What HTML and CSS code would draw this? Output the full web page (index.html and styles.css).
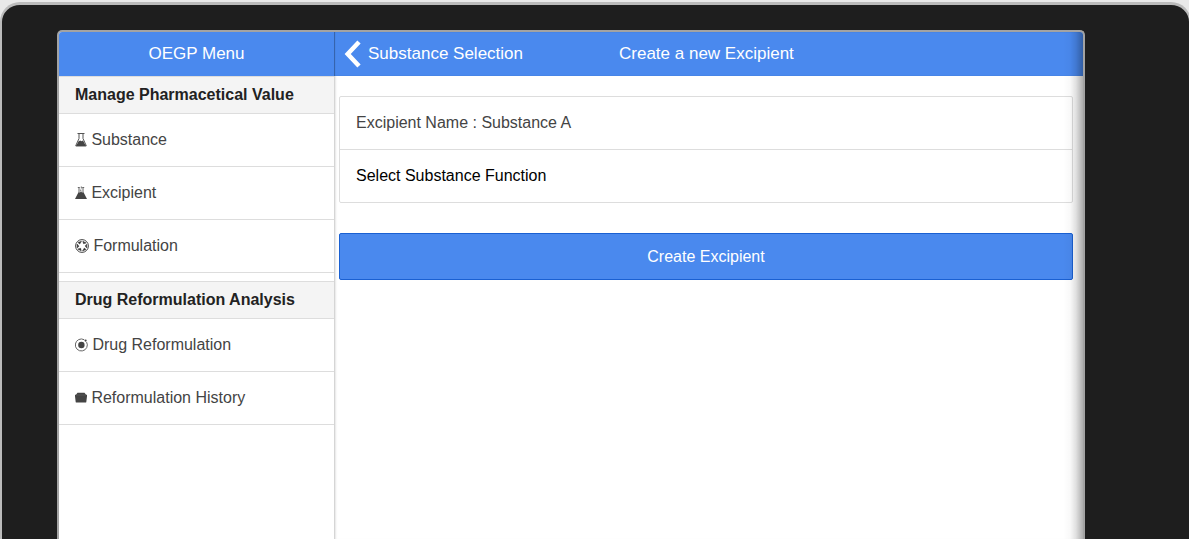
FILE: index.html
```html
<!DOCTYPE html>
<html lang="en">
<head>
<meta charset="utf-8">
<title>OEGP Menu</title>
<link rel="stylesheet" href="styles.css">
</head>
<body>
<div class="device">
  <div class="screen">
    <aside class="menu">
      <header class="bar menu-bar">OEGP Menu</header>
      <h2 class="divider">Manage Pharmacetical Value</h2>
      <a class="item">
        <svg class="icon" width="12" height="14" viewBox="0 0 12 14"><path d="M2.500 .5h7M4 1v4.500L.7 12.800h10.600L8 5.500V1" fill="none" stroke="#555" stroke-width="1"/><path d="M3.600 8.300l1.700-.7 1 .7 1.700-.8 3 5.800H1z" fill="#444"/></svg>
        <span>Substance</span>
      </a>
      <a class="item">
        <svg class="icon" width="12" height="14" viewBox="0 0 12 14"><path d="M2.800 1.500h2M7.200 1.500h2M4 2v4M8 2v4M6.300 .5v2M5.800 3.500V5" fill="none" stroke="#666" stroke-width="1"/><path d="M3.600 6l1.400.5 1-1.500 1 1.500L8.400 6 12 13H0z" fill="#444"/></svg>
        <span>Excipient</span>
      </a>
      <a class="item">
        <svg class="icon" width="14" height="14" viewBox="0 0 14 14"><circle cx="7" cy="7" r="6.400" fill="none" stroke="#444" stroke-width="1"/><path d="M3 3.500L6.500 2.200 4.700 5zM7.800 2.200l3.400 1.700-2.700.8zM11.700 5.200l.2 3.900-1.800-2.200zM11 10.500l-3.500 1.400 1.800-2.800zM6.200 11.800l-3.400-1.700 2.900-.8zM2.200 8.900l-.1-3.900 1.900 2.200z" fill="#333" stroke="#333" stroke-width=".5"/></svg>
        <span>Formulation</span>
      </a>
      <h2 class="divider second">Drug Reformulation Analysis</h2>
      <a class="item">
        <svg class="icon" width="13" height="14" viewBox="0 0 13 14"><path d="M9.200 1.700A6 6 0 1 0 11.600 4.100" fill="none" stroke="#666" stroke-width="1"/><circle cx="10.600" cy="2.600" r="1.100" fill="#444"/><circle cx="6.400" cy="7" r="3.200" fill="#444"/></svg>
        <span>Drug Reformulation</span>
      </a>
      <a class="item">
        <svg class="icon" width="12" height="14" viewBox="0 0 12 14"><path d="M2.500 1.700h7l1.500 2h1v1.500l-.7 5.800q-.1.600-.7.600H1.400q-.6 0-.7-.6L0 5.200V3.700h1z" fill="#444"/><path d="M1 4h10" stroke="#666" stroke-width=".5"/></svg>
        <span>Reformulation History</span>
      </a>
    </aside>
    <main class="content">
      <header class="bar content-bar">
        <a class="back">
          <svg width="18" height="30" viewBox="0 0 18 30"><path d="M15 3L3.700 15 15 27" fill="none" stroke="#fff" stroke-width="4.500"/></svg>
          <span>Substance Selection</span>
        </a>
        <h1 class="title">Create a new Excipient</h1>
      </header>
      <section class="form">
        <div class="card">
          <div class="row">Excipient Name : Substance A</div>
          <div class="row function">Select Substance Function</div>
        </div>
        <button class="create">Create Excipient</button>
      </section>
    </main>
    <div class="edge-shadow"></div>
  </div>
</div>
</body>
</html>
```
FILE: styles.css
```css
* { box-sizing: border-box; }
html { height: 100%; overflow: hidden; }
body {
  margin: 0;
  height: 539px;
  padding-top: 2px;
  overflow: hidden;
  background: #e9e9e9;
  font-family: "Liberation Sans", Arial, sans-serif;
  font-size: 16px;
}
.device {
  width: 1191px;
  height: 537px;
  padding: 25px 55px 0;
  border: 2px solid #bbb;
  border-top-width: 3px;
  border-bottom: 0;
  border-radius: 20px 20px 0 0;
  background: #1e1e1e;
}
.screen {
  position: relative;
  display: flex;
  width: 1028px;
  height: 509px;
  border: 2px solid #a3a3a3;
  border-bottom: 0;
  border-radius: 5px 5px 0 0;
  overflow: hidden;
  background: #fff;
}
.bar {
  height: 44px;
  background: #4a89ee;
  color: #fff;
  font-size: 17px;
  line-height: 43px;
}
.menu { width: 275px; flex: none; }
.menu-bar { text-align: center; }
.divider {
  height: 38px;
  margin: 0;
  padding: 0 16px;
  border: solid #ddd;
  border-width: 1px 0;
  background: #f4f4f4;
  color: #222;
  font-size: 16px;
  line-height: 35px;
  white-space: nowrap;
}
.second { margin-top: 8px; }
.item {
  display: flex;
  align-items: center;
  gap: 4.4px;
  height: 53px;
  padding: 0 16px;
  border-bottom: 1px solid #ddd;
  color: #444;
  line-height: 20px;
}
.icon { flex: none; }
.content {
  flex: 1;
  border-left: 1px solid #d5d5d5;
  box-shadow: inset 2px 0 2px -1px rgba(0, 0, 0, .1);
}
.content-bar {
  display: grid;
  grid-template-columns: 275px 1fr;
  margin-left: -1px;
  padding-left: 10px;
  box-shadow: inset 1px 0 1px rgba(0, 0, 0, .3);
}
.back { display: flex; align-items: center; gap: 6px; height: 44px; }
.back svg { flex: none; }
.back span { margin-top: -1px; }
.title { margin: 0; font-size: 17px; font-weight: 400; }
.form { padding: 20px 10px 0 4px; }
.card { border: 1px solid #ddd; border-radius: 2px; }
.row { height: 52px; padding: 0 16px; color: #444; line-height: 51px; }
.function { height: 53px; border-top: 1px solid #ddd; color: #000; }
.create {
  display: block;
  width: 100%;
  height: 47px;
  margin-top: 30px;
  padding: 0;
  border: 1px solid #1a60d2;
  border-radius: 2px;
  background: #4a89ee;
  color: #fff;
  font: 16px/45px "Liberation Sans", Arial, sans-serif;
}
.edge-shadow {
  position: absolute;
  top: 0;
  right: 0;
  bottom: 0;
  width: 20px;
  background: linear-gradient(to right, transparent, rgba(0, 0, 0, .025) 35%, rgba(0, 0, 0, .12) 65%, rgba(0, 0, 0, .32));
}
```
